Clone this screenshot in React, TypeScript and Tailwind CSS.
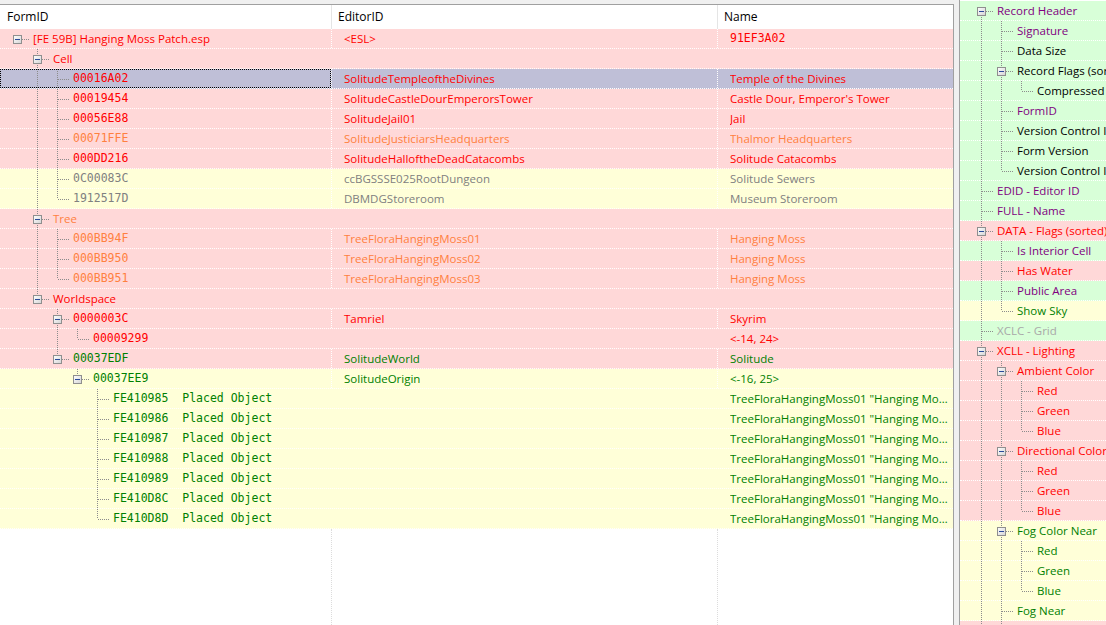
import React from 'react';

// row tints
const PINK = 'bg-[#ffd8d8]';
const YEL = 'bg-[#ffffd8]';
const GRN = 'bg-[#d8ffd8]';
const SEL = 'bg-[#bfbfd7]';

// text tones
const RED = 'text-[#ff0000]';
const ORANGE = 'text-[#ff8040]';
const GRAY = 'text-[#808080]';
const GREEN = 'text-[#008000]';
const PURPLE = 'text-[#800080]';
const BLACK = 'text-black';
const SILVER = 'text-[#a8a8a8]';

const SANS = "font-['Open_Sans',sans-serif] text-[11.5px]";
const MONO = "font-['DejaVu_Sans_Mono',monospace] text-[11.5px]";

interface TreeNode {
  children?: TreeNode[];
}

interface Flat<T> {
  node: T;
  depth: number;
  guides: boolean[];
  last: boolean;
  first: boolean;
}

function flatten<T extends TreeNode>(nodes: T[], depth = 0, guides: boolean[] = [], out: Flat<T>[] = []): Flat<T>[] {
  nodes.forEach((n, i) => {
    const last = i === nodes.length - 1;
    out.push({ node: n, depth, guides, last, first: depth === 0 && i === 0 });
    if (n.children) flatten(n.children as T[], depth + 1, [...guides, !last], out);
  });
  return out;
}

const TreeLines: React.FC<{ depth: number; guides: boolean[]; last: boolean; first: boolean; box: boolean; base: number }> = ({
  depth,
  guides,
  last,
  first,
  box,
  base,
}) => {
  const cx = base + depth * 20;
  const stroke = '#8c8c8c';
  return (
    <svg width={cx + 16} height={19} className="shrink-0 overflow-visible" shapeRendering="crispEdges">
      <defs>
        <linearGradient id="tvbox" x1="0" y1="0" x2="1" y2="1">
          <stop offset="0" stopColor="#ffffff" />
          <stop offset="1" stopColor="#d4d4d4" />
        </linearGradient>
      </defs>
      {guides.map((g, a) =>
        g ? <line key={a} x1={base + a * 20 + 0.5} x2={base + a * 20 + 0.5} y1={0} y2={20} stroke={stroke} strokeDasharray="1 1" /> : null
      )}
      {!first && <line x1={cx + 0.5} x2={cx + 0.5} y1={0} y2={10} stroke={stroke} strokeDasharray="1 1" />}
      {!last && <line x1={cx + 0.5} x2={cx + 0.5} y1={10} y2={20} stroke={stroke} strokeDasharray="1 1" />}
      <line x1={cx + 1} x2={cx + 13} y1={10.5} y2={10.5} stroke={stroke} strokeDasharray="1 1" />
      {box && (
        <g>
          <rect x={cx - 3.5} y={6.5} width={8} height={8} fill="url(#tvbox)" stroke="#8f8f8f" />
          <line x1={cx - 2} x2={cx + 3} y1={10.5} y2={10.5} stroke="#2a4a9a" />
        </g>
      )}
    </svg>
  );
};

interface LRow extends TreeNode {
  id: string;
  edid?: string;
  name?: string;
  tone: string;
  bg: string;
  idMono?: boolean;
  nameMono?: boolean;
  seps?: boolean;
  selected?: boolean;
  children?: LRow[];
}

const placed: LRow[] = ['FE410985', 'FE410986', 'FE410987', 'FE410988', 'FE410989', 'FE410D8C', 'FE410D8D'].map((f) => ({
  id: `${f}  Placed Object`,
  idMono: true,
  name: 'TreeFloraHangingMoss01 "Hanging Moss" [TREE:000BB94F]',
  tone: GREEN,
  bg: YEL,
}));

const leftTree: LRow[] = [
  {
    id: '[FE 59B] Hanging Moss Patch.esp',
    edid: '<ESL>',
    name: '91EF3A02',
    nameMono: true,
    tone: RED,
    bg: PINK,
    seps: true,
    children: [
      {
        id: 'Cell',
        tone: RED,
        bg: PINK,
        children: [
          { id: '00016A02', idMono: true, edid: 'SolitudeTempleoftheDivines', name: 'Temple of the Divines', tone: RED, bg: SEL, seps: true, selected: true },
          { id: '00019454', idMono: true, edid: 'SolitudeCastleDourEmperorsTower', name: "Castle Dour, Emperor's Tower", tone: RED, bg: PINK, seps: true },
          { id: '00056E88', idMono: true, edid: 'SolitudeJail01', name: 'Jail', tone: RED, bg: PINK, seps: true },
          { id: '00071FFE', idMono: true, edid: 'SolitudeJusticiarsHeadquarters', name: 'Thalmor Headquarters', tone: ORANGE, bg: PINK, seps: true },
          { id: '000DD216', idMono: true, edid: 'SolitudeHalloftheDeadCatacombs', name: 'Solitude Catacombs', tone: RED, bg: PINK, seps: true },
          { id: '0C00083C', idMono: true, edid: 'ccBGSSSE025RootDungeon', name: 'Solitude Sewers', tone: GRAY, bg: YEL, seps: true },
          { id: '1912517D', idMono: true, edid: 'DBMDGStoreroom', name: 'Museum Storeroom', tone: GRAY, bg: YEL, seps: true },
        ],
      },
      {
        id: 'Tree',
        tone: ORANGE,
        bg: PINK,
        children: [
          { id: '000BB94F', idMono: true, edid: 'TreeFloraHangingMoss01', name: 'Hanging Moss', tone: ORANGE, bg: PINK, seps: true },
          { id: '000BB950', idMono: true, edid: 'TreeFloraHangingMoss02', name: 'Hanging Moss', tone: ORANGE, bg: PINK, seps: true },
          { id: '000BB951', idMono: true, edid: 'TreeFloraHangingMoss03', name: 'Hanging Moss', tone: ORANGE, bg: PINK, seps: true },
        ],
      },
      {
        id: 'Worldspace',
        tone: RED,
        bg: PINK,
        children: [
          {
            id: '0000003C',
            idMono: true,
            edid: 'Tamriel',
            name: 'Skyrim',
            tone: RED,
            bg: PINK,
            seps: true,
            children: [{ id: '00009299', idMono: true, name: '<-14, 24>', tone: RED, bg: PINK }],
          },
          {
            id: '00037EDF',
            idMono: true,
            edid: 'SolitudeWorld',
            name: 'Solitude',
            tone: GREEN,
            bg: PINK,
            seps: true,
            children: [
              { id: '00037EE9', idMono: true, edid: 'SolitudeOrigin', name: '<-16, 25>', tone: GREEN, bg: YEL, seps: true, children: placed },
            ],
          },
        ],
      },
    ],
  },
];

interface RRow extends TreeNode {
  t: string;
  tone: string;
  bg: string;
  children?: RRow[];
}

const rgb = (tone: string, bg: string): RRow[] => ['Red', 'Green', 'Blue'].map((t) => ({ t, tone, bg }));

const rightTree: RRow[] = [
  {
    t: 'Record Header',
    tone: PURPLE,
    bg: GRN,
    children: [
      { t: 'Signature', tone: PURPLE, bg: GRN },
      { t: 'Data Size', tone: BLACK, bg: GRN },
      { t: 'Record Flags (sorted)', tone: BLACK, bg: GRN, children: [{ t: 'Compressed', tone: BLACK, bg: GRN }] },
      { t: 'FormID', tone: PURPLE, bg: GRN },
      { t: 'Version Control Info 1', tone: BLACK, bg: GRN },
      { t: 'Form Version', tone: BLACK, bg: GRN },
      { t: 'Version Control Info 2', tone: BLACK, bg: GRN },
    ],
  },
  { t: 'EDID - Editor ID', tone: PURPLE, bg: GRN },
  { t: 'FULL - Name', tone: PURPLE, bg: GRN },
  {
    t: 'DATA - Flags (sorted)',
    tone: RED,
    bg: PINK,
    children: [
      { t: 'Is Interior Cell', tone: PURPLE, bg: GRN },
      { t: 'Has Water', tone: RED, bg: PINK },
      { t: 'Public Area', tone: PURPLE, bg: GRN },
      { t: 'Show Sky', tone: GREEN, bg: YEL },
    ],
  },
  { t: 'XCLC - Grid', tone: SILVER, bg: GRN },
  {
    t: 'XCLL - Lighting',
    tone: RED,
    bg: PINK,
    children: [
      { t: 'Ambient Color', tone: RED, bg: PINK, children: rgb(RED, PINK) },
      { t: 'Directional Color', tone: RED, bg: PINK, children: rgb(RED, PINK) },
      { t: 'Fog Color Near', tone: GREEN, bg: YEL, children: rgb(GREEN, YEL) },
      { t: 'Fog Near', tone: GREEN, bg: YEL },
      { t: 'Fog Far', tone: RED, bg: PINK },
      { t: 'Directional Rotation XY', tone: RED, bg: PINK },
    ],
  },
  { t: 'XCWT - Water', tone: RED, bg: PINK },
];

const LeftRow: React.FC<{ f: Flat<LRow> }> = ({ f }) => {
  const n = f.node;
  const sep = n.seps ? 'border-white' : 'border-transparent';
  return (
    <div className={`flex h-5 shrink-0 border-b border-dotted border-white ${n.bg} ${n.tone}`}>
      <div className={`flex w-[332px] shrink-0 border-r border-dotted ${sep}`}>
        <div className={`flex flex-1 items-center ${n.selected ? 'outline-1 outline-dotted outline-black -outline-offset-1' : ''}`}>
          <TreeLines depth={f.depth} guides={f.guides} last={f.last} first={f.first} box={!!n.children} base={17} />
          <span className={`whitespace-pre leading-[19px] ${n.idMono ? MONO : SANS}`}>{n.id}</span>
        </div>
      </div>
      <div className={`flex w-[386px] shrink-0 items-center border-r border-dotted pl-3 ${sep}`}>
        <span className={`whitespace-nowrap ${SANS}`}>{n.edid}</span>
      </div>
      <div className="flex min-w-0 flex-1 items-center pl-3 pr-1">
        <span className={`overflow-hidden text-ellipsis whitespace-nowrap ${n.nameMono ? MONO : SANS}`}>{n.name}</span>
      </div>
    </div>
  );
};

const RightRow: React.FC<{ f: Flat<RRow> }> = ({ f }) => (
  <div className={`flex h-5 shrink-0 items-center border-b border-dotted border-white ${f.node.bg} ${f.node.tone}`}>
    <TreeLines depth={f.depth} guides={f.guides} last={f.last} first={f.first} box={!!f.node.children} base={21} />
    <span className={`whitespace-nowrap ${SANS}`}>{f.node.t}</span>
  </div>
);

export default function App() {
  const leftRows = flatten(leftTree);
  const rightRows = flatten(rightTree);

  return (
    <div className="flex h-[625px] w-[1106px] overflow-hidden bg-[#f0f0f0]">
      {/* record list */}
      <div className="flex w-[954px] shrink-0 flex-col pt-1">
        <div className="flex min-h-0 flex-1 flex-col border-t border-r border-[#a0a0a0] bg-white">
          <div className={`flex h-6 shrink-0 items-center bg-white text-black ${SANS} text-[12px]`}>
            <div className="flex h-full w-[332px] shrink-0 items-center border-r border-[#e5e5e5] pl-[7px]">FormID</div>
            <div className="flex h-full w-[386px] shrink-0 items-center border-r border-[#e5e5e5] pl-[6px]">EditorID</div>
            <div className="flex h-full flex-1 items-center pl-[6px]">Name</div>
          </div>
          {leftRows.map((f, i) => (
            <LeftRow key={i} f={f} />
          ))}
          <div className="flex flex-1">
            <div className="w-[332px] shrink-0 border-r border-dotted border-[#dcdcdc]" />
            <div className="w-[386px] shrink-0 border-r border-dotted border-[#dcdcdc]" />
            <div className="flex-1" />
          </div>
        </div>
      </div>

      {/* splitter */}
      <div className="w-[5px] shrink-0 bg-[#f0f0f0]" />

      {/* element view */}
      <div className="flex min-w-0 flex-1 flex-col overflow-hidden border-l border-[#a0a0a0] bg-white pt-px">
        {rightRows.map((f, i) => (
          <RightRow key={i} f={f} />
        ))}
      </div>
    </div>
  );
}
